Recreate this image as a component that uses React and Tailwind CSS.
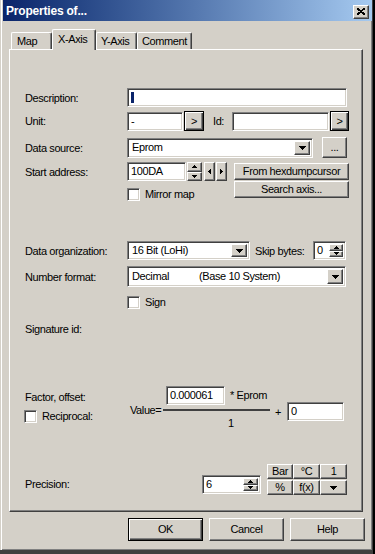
import React from "react";

const sunken = "bg-white border border-t-[#808080] border-l-[#808080] border-r-white border-b-white shadow-[inset_1px_1px_0_#404040,inset_-1px_-1px_0_#d4d0c8]";
const raised = "bg-[#d4d0c8] border border-t-white border-l-white border-r-[#404040] border-b-[#404040] shadow-[inset_-1px_-1px_0_#808080]";
const defBtn = "bg-[#d4d0c8] border border-black shadow-[inset_1px_1px_0_#fff,inset_-1px_-1px_0_#404040,inset_-2px_-2px_0_#808080]";

const DownTri = () => (
  <svg width="7" height="4" shapeRendering="crispEdges"><path d="M0 0h7v1h-1v1h-1v1h-1v1h-1v-1h-1v-1h-1v-1h-1z" fill="#000" /></svg>
);
const UpSmall = () => (
  <svg width="5" height="3" shapeRendering="crispEdges"><path d="M2 0h1v1h1v1h1v1h-5v-1h1v-1h1z" fill="#000" /></svg>
);
const DownSmall = () => (
  <svg width="5" height="3" shapeRendering="crispEdges"><path d="M0 0h5v1h-1v1h-1v1h-1v-1h-1v-1h-1z" fill="#000" /></svg>
);
const LeftTri = () => (
  <svg width="3" height="5" shapeRendering="crispEdges"><path d="M2 0h1v5h-1v-1h-1v-1h-1v-1h1v-1h1z" fill="#000" /></svg>
);
const RightTri = () => (
  <svg width="3" height="5" shapeRendering="crispEdges"><path d="M0 0h1v1h1v1h1v1h-1v1h-1v1h-1z" fill="#000" /></svg>
);

const Label = ({ children, w = "w-[102px]" }) => (
  <div className={`${w} shrink-0 leading-[14px] whitespace-nowrap`}>{children}</div>
);

const Spinner = ({ w = "w-[15px]" }) => (
  <div className={`${w} h-full flex flex-col`}>
    <div className={`${raised} flex-1 flex items-center justify-center`}><UpSmall /></div>
    <div className={`${raised} flex-1 flex items-center justify-center`}><DownSmall /></div>
  </div>
);

const Combo = ({ w, h, children }) => (
  <div className={`${sunken} ${w} ${h} flex items-stretch p-[2px]`}>
    <div className="flex-1 flex items-center pl-[2px] whitespace-nowrap">{children}</div>
    <div className={`${raised} w-[16px] flex items-center justify-center`}><DownTri /></div>
  </div>
);

const Check = () => <div className={`${sunken} w-[13px] h-[13px] shrink-0`} />;

const Tab = ({ label, w, pl, active }) => (
  <div
    className={`${w} ${pl} ${active ? "h-[21px] -mb-[1px] relative z-10 pt-[2px]" : "h-[17px]"} bg-[#d4d0c8] border-l border-t border-r border-l-white border-t-white border-r-[#404040] rounded-t-[2px] shadow-[inset_-1px_0_0_#808080] leading-[14px] pt-[1px]`}
  >
    {label}
  </div>
);

export default function App() {
  return (
    <div className="w-[375px] h-[554px] bg-black flex font-['Liberation_Sans',Arial,sans-serif] text-[11px] tracking-[-0.4px] text-black">
      <div className="w-[373px] flex flex-col">
        <div className="h-[551px] bg-[#d4d0c8] pl-[3px] border-r border-b border-r-[#404040] border-b-[#404040] shadow-[inset_1px_0_0_#d4d0c8,inset_2px_0_0_#fff,inset_-1px_-1px_0_#808080] flex flex-col">
          {/* title bar */}
          <div className="h-[21px] flex items-center bg-gradient-to-r from-[#0a246a] to-[#a6caf0] pl-[3px] pr-[3px]">
            <span className="text-white font-bold text-[12px] tracking-[-0.2px]">Properties of...</span>
            <div className={`${raised} ml-auto mt-[2px] w-[16px] h-[14px] flex items-center justify-center`}>
              <svg width="8" height="7" shapeRendering="crispEdges">
                <path d="M0 0L8 7M8 0L0 7" stroke="#000" strokeWidth="1.8" />
              </svg>
            </div>
          </div>

          {/* tabs */}
          <div className="h-[28px] flex items-end pl-[8px]">
            <Tab label="Map" w="w-[41px]" pl="pl-[5px]" />
            <Tab label="X-Axis" w="w-[44px]" pl="pl-[5px]" active />
            <Tab label="Y-Axis" w="w-[41px]" pl="pl-[4px]" />
            <Tab label="Comment" w="w-[55px]" pl="pl-[4px]" />
          </div>

          {/* panel */}
          <div className="ml-[6px] w-[354px] h-[463px] border border-t-white border-l-white border-r-[#404040] border-b-[#404040] shadow-[inset_-1px_-1px_0_#808080]">
            <div className="flex flex-col pl-[15px] pt-[38px]">
              {/* description */}
              <div className="flex items-center h-[19px]">
                <Label>Description:</Label>
                <div className={`${sunken} w-[220px] h-[19px] flex items-center pl-[3px]`}>
                  <span className="w-[3px] h-[11px] bg-[#0a246a]" />
                </div>
              </div>

              {/* unit / id */}
              <div className="flex items-center h-[20px] mt-[4px]">
                <Label>Unit:</Label>
                <div className={`${sunken} w-[56px] h-[19px] flex items-center pl-[3px] leading-none`}>-</div>
                <div className={`${defBtn} ml-[1px] w-[20px] h-[20px] flex items-center justify-center`}>&gt;</div>
                <Label w="ml-[9px] w-[19px]">Id:</Label>
                <div className={`${sunken} w-[97px] h-[19px]`} />
                <div className={`${defBtn} ml-[1px] w-[19px] h-[20px] flex items-center justify-center`}>&gt;</div>
              </div>

              {/* data source */}
              <div className="flex items-center h-[21px] mt-[6px]">
                <Label>Data source:</Label>
                <Combo w="w-[186px]" h="h-[20px]">Eprom</Combo>
                <div className={`${raised} ml-[9px] w-[25px] h-[21px] flex items-center justify-center`}>...</div>
              </div>

              {/* start address */}
              <div className="flex items-start mt-[4px]">
                <div className="h-[19px] flex items-center">
                  <Label>Start address:</Label>
                </div>
                <div className="w-[107px] flex flex-col">
                  <div className="flex h-[19px]">
                    <div className={`${sunken} w-[59px] h-[19px] flex items-center pl-[3px]`}>100DA</div>
                    <div className="ml-[1px] h-[19px]"><Spinner /></div>
                    <div className={`${raised} ml-[2px] w-[11px] flex items-center justify-center`}><LeftTri /></div>
                    <div className={`${raised} ml-[1px] w-[11px] flex items-center justify-center`}><RightTri /></div>
                  </div>
                  <div className="flex items-center mt-[7px]">
                    <Check />
                    <span className="ml-[5px] leading-[13px]">Mirror map</span>
                  </div>
                </div>
                <div className="flex flex-col mt-[1px]">
                  <div className={`${raised} w-[115px] h-[17px] flex items-center justify-center`}>From hexdumpcursor</div>
                  <div className={`${raised} mt-[1px] w-[115px] h-[17px] flex items-center justify-center`}>Search axis...</div>
                </div>
              </div>

              {/* data organization */}
              <div className="flex items-center h-[19px] mt-[40px]">
                <Label>Data organization:</Label>
                <Combo w="w-[123px]" h="h-[19px]">16 Bit (LoHi)</Combo>
                <Label w="ml-[5px] w-[58px]">Skip bytes:</Label>
                <div className={`${sunken} w-[33px] h-[19px] flex items-stretch p-[2px]`}>
                  <span className="flex-1 flex items-center pl-[1px]">0</span>
                  <Spinner w="w-[14px]" />
                </div>
              </div>

              {/* number format */}
              <div className="flex items-center h-[21px] mt-[6px]">
                <Label>Number format:</Label>
                <Combo w="w-[219px]" h="h-[21px]">
                  <span className="w-[67px]">Decimal</span>
                  <span>(Base 10 System)</span>
                </Combo>
              </div>

              {/* sign */}
              <div className="flex items-center h-[13px] mt-[9px] pl-[102px]">
                <Check />
                <span className="ml-[5px] leading-[13px]">Sign</span>
              </div>

              {/* signature */}
              <div className="h-[14px] mt-[13px] leading-[14px]">Signature id:</div>

              {/* factor / offset */}
              <div className="flex items-start mt-[50px]">
                <div className="w-[103px] flex flex-col">
                  <span className="mt-[4px] leading-[14px]">Factor, offset:</span>
                  <div className="flex items-center mt-[6px] -ml-[1px]">
                    <Check />
                    <span className="ml-[5px] leading-[13px]">Reciprocal:</span>
                  </div>
                </div>
                <span className="w-[35px] pl-[2px] mt-[17px] leading-[14px]">Value=</span>
                <div className="w-[107px] flex flex-col">
                  <div className="flex items-center h-[19px]">
                    <div className={`${sunken} ml-[3px] w-[59px] h-[19px] flex items-center pl-[3px]`}>0.000061</div>
                    <span className="ml-[5px]">* Eprom</span>
                  </div>
                  <div className="mt-[4px] h-[2px] bg-[#404040]" />
                  <span className="mt-[5px] ml-[65px] leading-[14px]">1</span>
                </div>
                <span className="ml-[5px] mt-[19px] leading-[14px]">+</span>
                <div className={`${sunken} ml-[6px] mt-[16px] w-[57px] h-[19px] flex items-center pl-[3px]`}>0</div>
              </div>

              {/* precision */}
              <div className="flex items-start mt-[34px]">
                <span className="w-[102px] mt-[13px] leading-[14px]">Precision:</span>
                <div className={`${sunken} ml-[75px] mt-[11px] w-[59px] h-[19px] flex items-stretch p-[2px]`}>
                  <span className="flex-1 flex items-center pl-[1px]">6</span>
                  <Spinner />
                </div>
                <div className="ml-[6px] grid grid-cols-[26px_27px_27px] gap-y-[1px]">
                  {["Bar", "°C", "1", "%", "f(x)"].map((t) => (
                    <div key={t} className={`${raised} h-[15px] flex items-center justify-center leading-none`}>{t}</div>
                  ))}
                  <div className={`${raised} h-[15px] flex items-center justify-center`}><DownTri /></div>
                </div>
              </div>
            </div>
          </div>

          {/* dialog buttons */}
          <div className="flex justify-end gap-[6px] pr-[7px] mt-[6px]">
            <div className={`${defBtn} w-[75px] h-[23px] flex items-center justify-center`}>OK</div>
            <div className={`${raised} w-[75px] h-[23px] flex items-center justify-center`}>Cancel</div>
            <div className={`${raised} w-[75px] h-[23px] flex items-center justify-center`}>Help</div>
          </div>
        </div>
        <div className="h-[3px] bg-[#404040]" />
      </div>
    </div>
  );
}
